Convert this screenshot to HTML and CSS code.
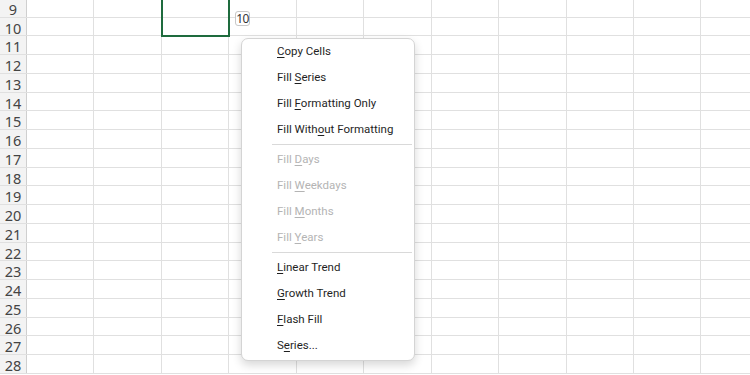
FILE: index.html
```html
<!DOCTYPE html>
<html>
<head>
  <meta charset="UTF-8">
  <title>Auto Fill Options</title>
  <link rel="stylesheet" href="styles.css">
</head>
<body>
  <div class="sheet">
    <div class="grid">
      <div class="row"><div class="row-head">9</div><div class="cells"></div></div>
      <div class="row"><div class="row-head">10</div><div class="cells"></div></div>
      <div class="row"><div class="row-head">11</div><div class="cells"></div></div>
      <div class="row"><div class="row-head">12</div><div class="cells"></div></div>
      <div class="row"><div class="row-head">13</div><div class="cells"></div></div>
      <div class="row"><div class="row-head">14</div><div class="cells"></div></div>
      <div class="row"><div class="row-head">15</div><div class="cells"></div></div>
      <div class="row"><div class="row-head">16</div><div class="cells"></div></div>
      <div class="row"><div class="row-head">17</div><div class="cells"></div></div>
      <div class="row"><div class="row-head">18</div><div class="cells"></div></div>
      <div class="row"><div class="row-head">19</div><div class="cells"></div></div>
      <div class="row"><div class="row-head">20</div><div class="cells"></div></div>
      <div class="row"><div class="row-head">21</div><div class="cells"></div></div>
      <div class="row"><div class="row-head">22</div><div class="cells"></div></div>
      <div class="row"><div class="row-head">23</div><div class="cells"></div></div>
      <div class="row"><div class="row-head">24</div><div class="cells"></div></div>
      <div class="row"><div class="row-head">25</div><div class="cells"></div></div>
      <div class="row"><div class="row-head">26</div><div class="cells"></div></div>
      <div class="row"><div class="row-head">27</div><div class="cells"></div></div>
      <div class="row"><div class="row-head">28</div><div class="cells"></div></div>
    </div>

    <!-- selected range -->
    <div class="selection"></div>

    <!-- auto fill options button -->
    <div class="fill-badge">10</div>

    <!-- Auto Fill Options menu -->
    <div class="fill-menu">
      <div class="menu-item"><u>C</u>opy Cells</div>
      <div class="menu-item">Fill <u>S</u>eries</div>
      <div class="menu-item">Fill <u>F</u>ormatting Only</div>
      <div class="menu-item">Fill With<u>o</u>ut Formatting</div>
      <div class="menu-sep"></div>
      <div class="menu-item disabled">Fill <u>D</u>ays</div>
      <div class="menu-item disabled">Fill <u>W</u>eekdays</div>
      <div class="menu-item disabled">Fill <u>M</u>onths</div>
      <div class="menu-item disabled">Fill <u>Y</u>ears</div>
      <div class="menu-sep"></div>
      <div class="menu-item"><u>L</u>inear Trend</div>
      <div class="menu-item"><u>G</u>rowth Trend</div>
      <div class="menu-item"><u>F</u>lash Fill</div>
      <div class="menu-item">S<u>e</u>ries...</div>
    </div>
  </div>
</body>
</html>
```

FILE: styles.css
```css
body {
  margin: 0;
  width: 750px;
  height: 375px;
  overflow: hidden;
  background: #fff;
  font-family: "Noto Sans", "Open Sans", sans-serif;
}

.sheet {
  position: relative;
  width: 750px;
  height: 375px;
  overflow: hidden;
}

.grid {
  margin-top: -1.25px;
}

.row {
  display: flex;
  height: 18.75px;
  box-sizing: border-box;
  border-bottom: 1px solid #e0e0e0;
}

.row-head {
  width: 26px;
  flex-shrink: 0;
  background: #f3f3f3;
  border-right: 1px solid #cfcfcf;
  color: #444;
  font-size: 14.5px;
  line-height: 20px;
  text-align: center;
}

.cells {
  flex: 1;
  background: repeating-linear-gradient(to right,
    transparent 0 66.45px,
    #e0e0e0 66.45px 67.45px);
}

.selection {
  position: absolute;
  left: 160.5px;
  top: -5px;
  width: 69.8px;
  height: 42.3px;
  box-sizing: border-box;
  border: 2px solid #1e6b3d;
}

.fill-badge {
  position: absolute;
  left: 235px;
  top: 11px;
  width: 15px;
  height: 15px;
  box-sizing: border-box;
  background: #fff;
  border: 1px solid #c8c8c8;
  border-radius: 3px;
  color: #333;
  font-size: 12px;
  line-height: 13px;
  letter-spacing: -0.5px;
  text-align: center;
}

.fill-menu {
  position: absolute;
  left: 241px;
  top: 37.5px;
  width: 174px;
  box-sizing: border-box;
  padding: 0 0 1px;
  background: #fff;
  border: 1px solid #d4d4d4;
  border-radius: 7px;
  box-shadow: 0 4px 10px rgba(0, 0, 0, 0.16);
}

.menu-item {
  height: 26px;
  line-height: 24px;
  padding-left: 35px;
  font-family: Roboto, "Noto Sans", sans-serif;
  font-size: 11.5px;
  color: #1f1f1f;
  white-space: nowrap;
}

.menu-item u {
  text-underline-offset: 2px;
}

.menu-item.disabled {
  color: #b4b4b4;
}

.menu-sep {
  height: 1px;
  margin: 1.5px 2px 1.5px 30px;
  background: #d9d9d9;
}
```
